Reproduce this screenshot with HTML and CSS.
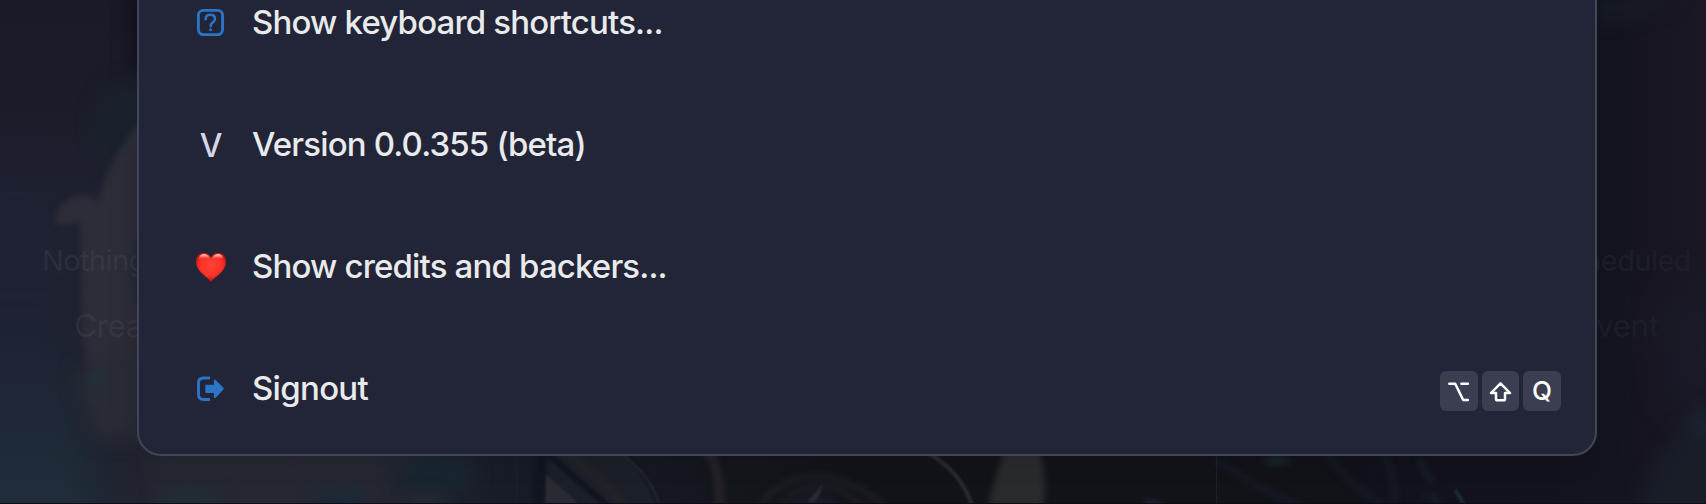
FILE: index.html
```html
<!DOCTYPE html>
<html lang="en">
<head>
<meta charset="utf-8">
<title>Command menu</title>
<link rel="stylesheet" href="styles.css">
</head>
<body>
<main class="screen">
  <svg class="backdrop" viewBox="0 0 1706 504" aria-hidden="true">
    <defs>
      <linearGradient id="base" x1="0" x2="1" y1="0" y2="0">
        <stop offset="0" stop-color="#1e2233"/><stop offset=".06" stop-color="#1e2230"/><stop offset=".1" stop-color="#252731"/><stop offset=".22" stop-color="#252731"/><stop offset=".3" stop-color="#161b27"/><stop offset=".37" stop-color="#151820"/>
        <stop offset=".5" stop-color="#121318"/><stop offset=".7" stop-color="#111318"/><stop offset=".9" stop-color="#12121b"/><stop offset=".95" stop-color="#14141e"/><stop offset="1" stop-color="#1b1823"/>
      </linearGradient>
      <linearGradient id="top" x1="0" x2="0" y1="0" y2="1"><stop offset="0" stop-color="#1b1a28"/><stop offset=".45" stop-color="#1b1c2a"/><stop offset="1" stop-color="#1b1c2a" stop-opacity="0"/></linearGradient>
      <linearGradient id="teal" x1="0" x2="0" y1="0" y2="1"><stop offset="0" stop-color="#21303c" stop-opacity="0"/><stop offset="1" stop-color="#21313d"/></linearGradient>
      <filter id="b3" x="-50%" y="-50%" width="200%" height="200%"><feGaussianBlur stdDeviation="3"/></filter>
      <filter id="b1" x="-50%" y="-50%" width="200%" height="200%"><feGaussianBlur stdDeviation="1.2"/></filter>
      <filter id="b9" x="-80%" y="-100%" width="260%" height="300%"><feGaussianBlur stdDeviation="9"/></filter>
      <filter id="b20" x="-100%" y="-100%" width="300%" height="300%"><feGaussianBlur stdDeviation="20"/></filter>
    </defs>
    <rect width="1706" height="504" fill="url(#base)"/>
    <rect width="200" height="230" fill="url(#top)"/>
    <path d="M-60 300H60L110 560H-60Z" fill="url(#teal)" filter="url(#b20)"/>
    <ellipse cx="130" cy="125" rx="35" ry="45" fill="#1a222c" filter="url(#b9)"/>
    <path d="M160 -30H133Q128 30 133 70H160Z" fill="#10131b" filter="url(#b9)"/>
    <path d="M150 112Q110 150 98 203Q90 192 75 196Q54 204 55 223Q64 228 80 220Q82 290 82 340Q90 360 90 400L150 420Z" fill="#2c2d37" filter="url(#b3)"/>
    <path d="M75 375Q100 350 150 340V440H95Z" fill="#292b34" filter="url(#b9)"/>
    <path d="M142 225Q118 270 142 320Z" fill="#212a34" filter="url(#b3)"/>
    <ellipse cx="97" cy="378" rx="10" ry="6" fill="#22303a" filter="url(#b3)"/>
    <path d="M0 194Q30 192 60 197" fill="none" stroke="#1d2437" stroke-width="6" filter="url(#b3)"/>
    <ellipse cx="190" cy="503" rx="32" ry="14" fill="#202e36" filter="url(#b9)"/>
    <ellipse cx="342" cy="503" rx="25" ry="16" fill="#1b2938" filter="url(#b9)"/>
    <ellipse cx="435" cy="475" rx="40" ry="22" fill="#1a2531" filter="url(#b9)"/>
    <ellipse cx="425" cy="512" rx="20" ry="16" fill="#292b36" filter="url(#b9)"/>
    <path d="M300 450Q286 480 288 515" fill="none" stroke="#292933" stroke-width="4" filter="url(#b3)"/>
    <path d="M541 450Q543 480 534 515" fill="none" stroke="#11141e" stroke-width="9" filter="url(#b3)"/>
    <path d="M550 446H616Q648 474 661 520H545Z" fill="#1b1f27" filter="url(#b1)"/>
    <path d="M546 474L577 502V525H545Z" fill="#2a2a33" filter="url(#b1)"/>
    <path d="M560 450Q600 475 630 515" fill="none" stroke="#222329" stroke-width="9" filter="url(#b3)"/>
    <path d="M544 450Q580 484 620 515" fill="none" stroke="#12151e" stroke-width="6" filter="url(#b1)"/>
    <path d="M624 456Q652 476 661 510" fill="none" stroke="#262a31" stroke-width="2" filter="url(#b1)"/>
    <path d="M704 446Q724 470 719 520" fill="none" stroke="#29262b" stroke-width="7" filter="url(#b3)"/>
    <path d="M755 520C770 465 850 460 895 520M775 520C790 475 840 475 875 520" fill="none" stroke="#1f2025" stroke-width="5" filter="url(#b3)"/>
    <ellipse cx="815" cy="508" rx="26" ry="17" fill="#171923" filter="url(#b3)"/>
    <ellipse cx="814" cy="521" rx="6" ry="13" transform="rotate(25 814 521)" fill="#34333b" filter="url(#b1)"/>
    <path d="M808 502Q817 506 823 485Q818 488 808 502Z" fill="#2c2b34" filter="url(#b1)"/>
    <path d="M923 450Q965 472 975 515" fill="none" stroke="#2a2b30" stroke-width="4" filter="url(#b1)"/>
    <path d="M1006 446H1038Q1048 470 1043 520H984Q994 480 1006 446Z" fill="#282a2e" filter="url(#b3)"/>
    <ellipse cx="1168" cy="516" rx="24" ry="5" transform="rotate(24 1168 516)" fill="#1e313a" filter="url(#b3)"/>
    <path d="M1145 502Q1165 505 1188 526" fill="none" stroke="#1a2933" stroke-width="6" filter="url(#b3)"/>
    <path d="M1215 460Q1260 490 1320 515M1325 450Q1350 490 1400 515M1380 450Q1398 470 1394 515" fill="none" stroke="#161d28" stroke-width="4" filter="url(#b3)"/>
    <path d="M1420 460Q1424 474 1434 482M1424 495Q1435 497 1440 503M1456 507L1465 515" fill="none" stroke="#182330" stroke-width="4" filter="url(#b3)"/>
    <path d="M1455 490L1464 504" stroke="#1b2b3b" stroke-width="4" filter="url(#b1)"/>
    <ellipse cx="1277" cy="461" rx="14" ry="4" fill="#18272d" filter="url(#b3)"/>
    <path d="M1597 20Q1640 18 1680 0H1597Z" fill="#171d27" filter="url(#b9)"/>
    <ellipse cx="1697" cy="350" rx="25" ry="60" fill="#181c2a" filter="url(#b20)"/>
    <path d="M1636 525Q1650 440 1720 405V525Z" fill="#181d28" filter="url(#b9)"/>
    <ellipse cx="1703" cy="424" rx="16" ry="9" transform="rotate(35 1703 424)" fill="#1b2735" filter="url(#b9)"/>
    <rect y="503" width="1706" height="1" fill="#100d17"/>
  </svg>

  <div class="board">
    <section class="column column-left">
      <p class="empty">Nothing scheduled</p>
      <div class="create">Create event</div>
    </section>
    <section class="column"></section>
    <section class="column column-right">
      <p class="empty">Nothing scheduled</p>
      <div class="create">Create event</div>
    </section>
  </div>

  <div class="menu">
    <div class="item">
      <svg class="icon" viewBox="0 0 30 30" fill="none" stroke="#2b74c8">
        <rect x="2.4" y="2.4" width="24.2" height="24.2" rx="5" stroke-width="2.9"/>
        <path d="M9.6 11.2C9.6 8.1 11.6 6.7 14.3 6.7S19 8.3 19 10.9C19 14.6 14.6 14 14.6 18.3" stroke-width="2.5" stroke-linecap="round"/>
        <circle cx="14.6" cy="21.7" r="1.5" fill="#2b74c8" stroke="none"/>
      </svg>
      <span class="label">Show keyboard shortcuts...</span>
    </div>
    <div class="item">
      <span class="icon letter">V</span>
      <span class="label">Version 0.0.355 (beta)</span>
    </div>
    <div class="item">
      <svg class="icon" viewBox="0 0 30 30">
        <defs>
          <radialGradient id="heart" cx=".5" cy=".42" r=".62"><stop offset="0" stop-color="#ff4437"/><stop offset=".6" stop-color="#fb3128"/><stop offset="1" stop-color="#a90500"/></radialGradient>
          <linearGradient id="shine" x1="0" x2="0" y1="0" y2="1"><stop offset="0" stop-color="#ffe0db"/><stop offset="1" stop-color="#ff6a5c" stop-opacity="0"/></linearGradient>
        </defs>
        <path d="M15 30C11.500 25 0 19.500 0 10C0 4.300 3.200 1 7.500 1C11 1 13.600 2.800 15 6.200C16.400 2.800 19 1 22.500 1C26.800 1 30 4.300 30 10C30 19.500 18.500 25 15 30Z" fill="url(#heart)"/>
        <path d="M2.500 8C3 3.800 5 2.200 7.700 2.200C10.600 2.200 12.600 3.600 13.500 6.500C10 5 5.500 5 2.500 8ZM27.500 8C27 3.800 25 2.200 22.300 2.200C19.400 2.200 17.400 3.600 16.500 6.500C20 5 24.500 5 27.500 8Z" fill="url(#shine)"/>
      </svg>
      <span class="label">Show credits and backers...</span>
    </div>
    <div class="item">
      <svg class="icon" viewBox="0 0 30 30">
        <path d="M14 4H7.500Q2.500 4 2.500 9V20.500Q2.500 25.500 7.500 25.500H14" fill="none" stroke="#2b74c8" stroke-width="2.900"/>
        <path d="M10.300 10.800H17.900V6.500Q18.300 4.700 19.700 6L27.400 13.800Q28.300 14.700 27.400 15.600L19.700 23.800Q18.300 25 17.900 23.200V19.100H10.300Q9.300 19.100 9.300 18.100V11.800Q9.300 10.800 10.300 10.800Z" fill="#2b74c8"/>
      </svg>
      <span class="label signout">Signout</span>
      <div class="keys">
        <kbd class="key"><svg viewBox="0 0 38 40"><path d="M9.300 12.700H15.200L23.200 29H27.900M21.400 12.700H27.900"/></svg></kbd>
        <kbd class="key middle"><svg viewBox="0 0 37 40"><path d="M18.500 12.300L28 22H23V28Q23 29.300 21.700 29.300H15.300Q14 29.300 14 28V22H9Z"/></svg></kbd>
        <kbd class="key">Q</kbd>
      </div>
    </div>
  </div>
</main>
</body>
</html>
```
FILE: styles.css
```css
* { box-sizing: border-box; }
body {
  margin: 0;
  background: #12131b;
  font-family: Inter, "Liberation Sans", sans-serif;
}
.screen {
  position: relative;
  width: 1706px;
  height: 504px;
  overflow: hidden;
}
.backdrop {
  position: absolute;
  inset: 0;
  width: 1706px;
  height: 504px;
}
.backdrop filter { color-interpolation-filters: sRGB; }
.board {
  position: absolute;
  top: 0;
  left: -183px;
  display: grid;
  grid-template-columns: repeat(3, 700px);
  height: 503px;
}
.column {
  display: flex;
  flex-direction: column;
  align-items: center;
  padding-top: 240px;
  border-right: 1px solid #1d202b;
}
.empty {
  margin: 0;
  font-size: 29px;
  line-height: 42px;
  letter-spacing: -0.55px;
}
.create {
  width: 260px;
  height: 56px;
  margin-top: 15px;
  border-radius: 10px;
  font-size: 31px;
  line-height: 58px;
  letter-spacing: -0.2px;
  text-align: center;
}
.column-left { color: rgba(76, 80, 92, 0.3); }
.column-right { color: #1d1d28; }
.column-right .create { background: rgba(30, 32, 44, 0.12); }
.menu {
  position: absolute;
  left: 137px;
  top: -60px;
  display: flex;
  flex-direction: column;
  width: 1460px;
  height: 516px;
  padding: 20px 34px 0 56px;
  border: 2px solid #41465a;
  border-radius: 24px;
  background: #222437;
  box-shadow: 0 0 32px rgba(8, 9, 14, 0.12);
}
.item {
  display: flex;
  align-items: center;
  height: 122px;
}
.icon {
  flex: none;
  width: 30px;
  height: 30px;
  margin: 0 26px 0 1px;
}
.letter {
  padding-top: 1px;
  color: #d3d7e6;
  font-size: 32px;
  font-weight: 450;
  line-height: 30px;
  text-align: center;
}
.label {
  margin-bottom: 2px;
  color: #e9eaeb;
  font-size: 33px;
  font-weight: 450;
  line-height: 44px;
  letter-spacing: -0.84px;
  white-space: nowrap;
}
.signout {
  margin-bottom: 3px;
  letter-spacing: -0.7px;
}
.keys {
  display: flex;
  gap: 4px;
  margin: 4px 0 0 auto;
}
.key {
  display: flex;
  align-items: center;
  justify-content: center;
  width: 38px;
  height: 40px;
  border-radius: 6px;
  background: #3b3e51;
  color: #fff;
  font: 500 26px/40px Inter, sans-serif;
}
.middle { width: 37px; }
.key svg {
  width: 100%;
  height: 100%;
  fill: none;
  stroke: #fff;
  stroke-width: 2.5;
  stroke-linecap: round;
  stroke-linejoin: round;
}
```
